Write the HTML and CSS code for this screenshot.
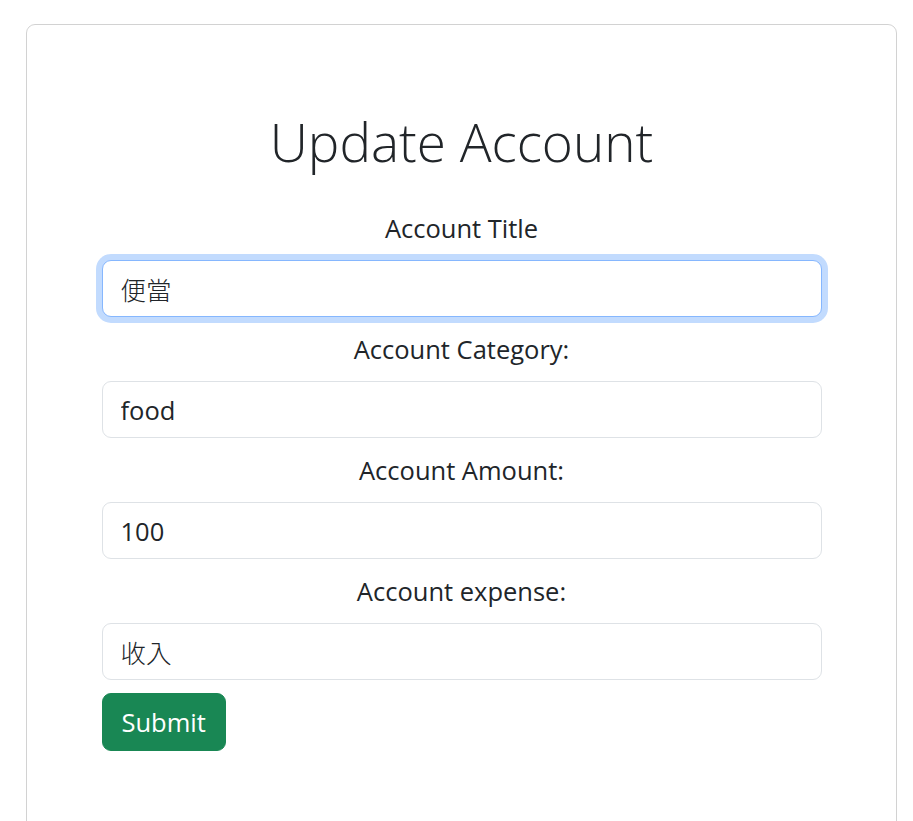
FILE: index.html
```html
<!DOCTYPE html>
<html lang="en">
<head>
<meta charset="utf-8">
<title>Update Account</title>
<link rel="stylesheet" href="styles.css">
</head>
<body>
<div class="card">
  <form class="form">
    <h1 class="title">Update Account</h1>
    <label class="label" for="title">Account Title</label>
    <input class="input cjk focused" id="title" type="text" value="便當">
    <label class="label" for="category">Account Category:</label>
    <input class="input" id="category" type="text" value="food">
    <label class="label" for="amount">Account Amount:</label>
    <input class="input" id="amount" type="text" value="100">
    <label class="label" for="expense">Account expense:</label>
    <input class="input cjk last" id="expense" type="text" value="收入">
    <div class="actions">
      <button class="btn" type="button">Submit</button>
    </div>
  </form>
</div>
</body>
</html>
```
FILE: styles.css
```css
html, body {
  margin: 0;
  padding: 0;
  background: #fff;
  overflow: hidden;
}
body {
  font-family: "Open Sans", "Noto Sans CJK TC", sans-serif;
  color: #212529;
  padding: 24px 16px 0 26px;
}
.card {
  border: 1px solid rgba(0, 0, 0, 0.175);
  border-radius: 9px;
  height: 900px;
  box-sizing: border-box;
}
.form {
  width: 720px;
  margin: 0 auto;
  padding-top: 86px;
  display: flex;
  flex-direction: column;
}
.title {
  font-weight: 300;
  font-size: 53px;
  line-height: 62px;
  margin: 0 0 38px;
  text-align: center;
}
.label {
  display: block;
  text-align: center;
  font-size: 25.5px;
  line-height: 34px;
  padding-bottom: 2px;
  margin-bottom: 13px;
}
.input {
  display: block;
  box-sizing: border-box;
  width: 100%;
  height: 57px;
  padding: 0 18px;
  font-family: "Open Sans", "Noto Sans CJK TC", sans-serif;
  font-size: 25.5px;
  color: #212529;
  background: #fff;
  border: 1px solid #dee2e6;
  border-radius: 9px;
  margin: 0 0 15px;
  outline: none;
}
.input.cjk {
  font-weight: 300;
}
.input.focused {
  border-color: #86b7fe;
  box-shadow: 0 0 0 6px rgba(13, 110, 253, 0.25);
}
.input.last {
  margin-bottom: 13px;
}
.actions {
  display: flex;
}
.btn {
  height: 58px;
  padding: 0 19px;
  font-family: "Open Sans", sans-serif;
  font-size: 25.5px;
  color: #fff;
  background: #198754;
  border: 1px solid #198754;
  border-radius: 9px;
  cursor: pointer;
}
```
